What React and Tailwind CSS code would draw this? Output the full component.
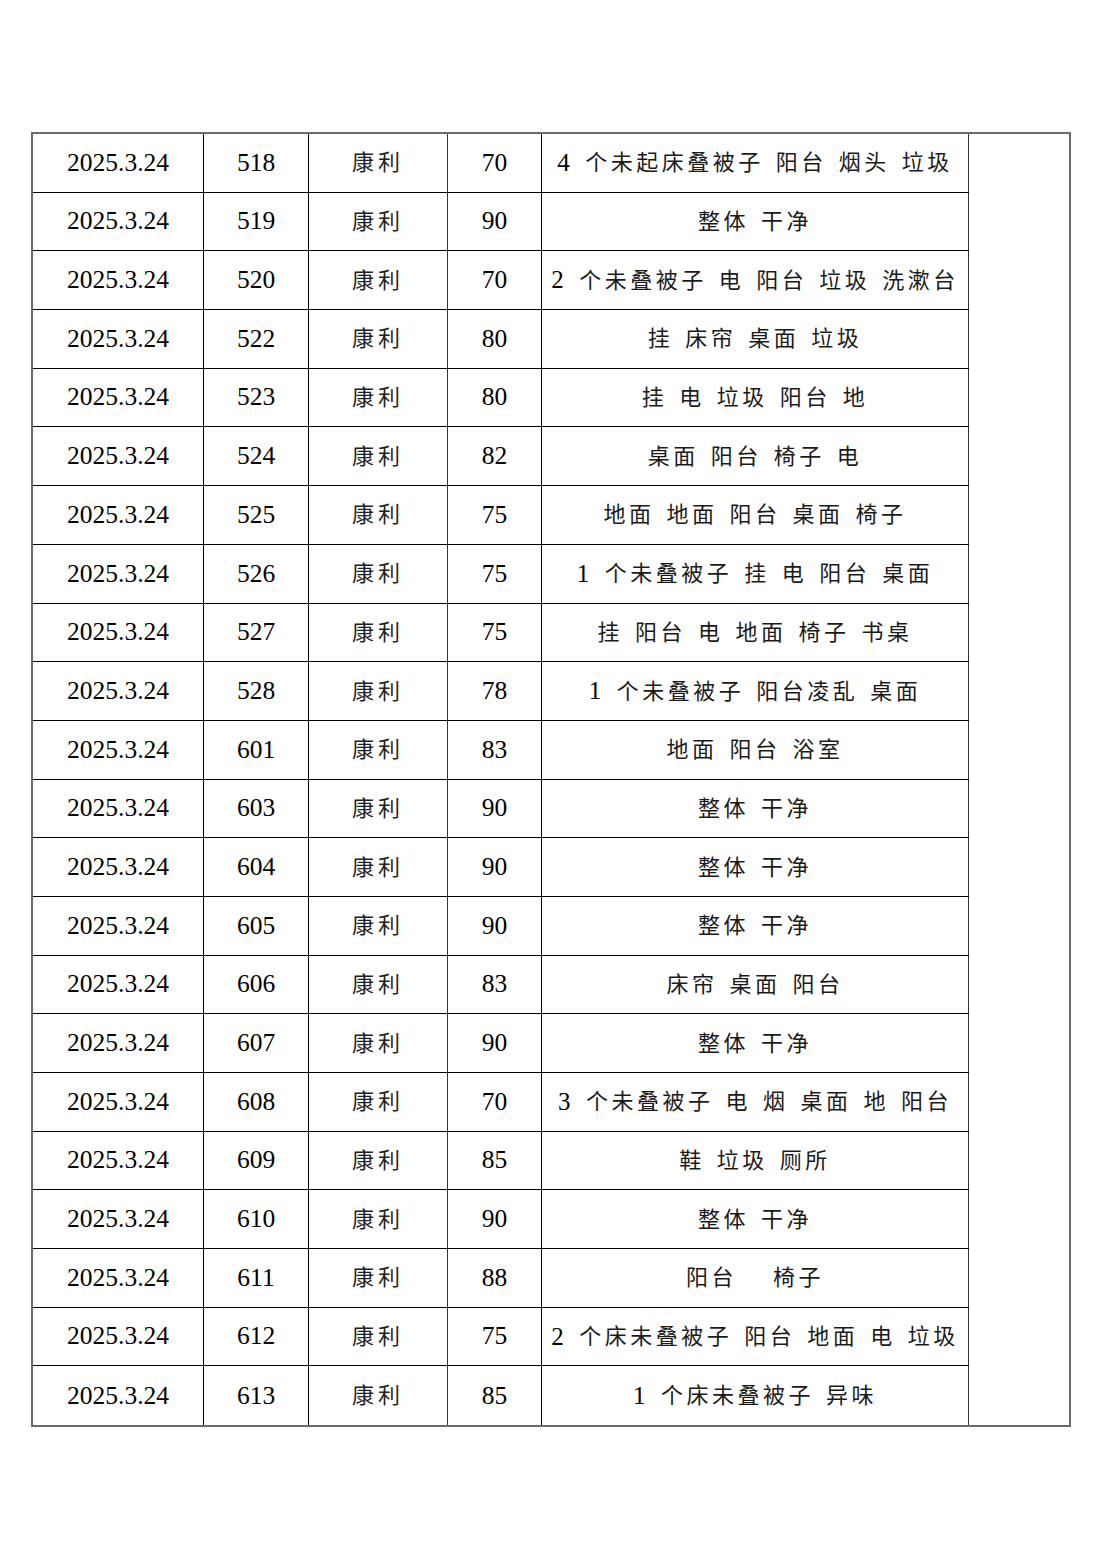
const rows = [
  ["518", "70", "4 个未起床叠被子 阳台 烟头 垃圾"],
  ["519", "90", "整体 干净"],
  ["520", "70", "2 个未叠被子 电 阳台 垃圾 洗漱台"],
  ["522", "80", "挂 床帘 桌面 垃圾"],
  ["523", "80", "挂 电 垃圾 阳台 地"],
  ["524", "82", "桌面 阳台 椅子 电"],
  ["525", "75", "地面 地面 阳台 桌面 椅子"],
  ["526", "75", "1 个未叠被子 挂 电 阳台 桌面"],
  ["527", "75", "挂 阳台 电 地面 椅子 书桌"],
  ["528", "78", "1 个未叠被子 阳台凌乱 桌面"],
  ["601", "83", "地面 阳台 浴室"],
  ["603", "90", "整体 干净"],
  ["604", "90", "整体 干净"],
  ["605", "90", "整体 干净"],
  ["606", "83", "床帘 桌面 阳台"],
  ["607", "90", "整体 干净"],
  ["608", "70", "3 个未叠被子 电 烟 桌面 地 阳台"],
  ["609", "85", "鞋 垃圾 厕所"],
  ["610", "90", "整体 干净"],
  ["611", "88", "阳台   椅子"],
  ["612", "75", "2 个床未叠被子 阳台 地面 电 垃圾"],
  ["613", "85", "1 个床未叠被子 异味"],
];

const serif = "font-['Liberation_Serif','Noto_Sans_CJK_SC',serif]";

function Desc({ text }) {
  const m = text.match(/^(\d)(.*)$/);
  if (!m) return text;
  return (
    <>
      <span className="text-[25px] text-black">{m[1]}</span>
      {m[2]}
    </>
  );
}

export default function App() {
  return (
    <div className="bg-white w-[1102px] h-[1559px] pt-[132px] pl-[31px]">
      <div className="w-[1040px] flex border-2 border-[#6b6b6b]">
        <div className="flex flex-col">
          {rows.map((r, i) => (
            <div
              key={r[0]}
              className={`flex h-[58.7px] ${i < rows.length - 1 ? "border-b border-black" : ""}`}
            >
              <div className={`w-[171px] border-r border-black flex items-center justify-center text-[25.5px] text-black ${serif}`}>
                2025.3.24
              </div>
              <div className={`w-[105px] border-r border-black flex items-center justify-center text-[25.5px] text-black ${serif}`}>
                {r[0]}
              </div>
              <div className={`w-[139px] border-r border-[#333] flex items-center justify-center text-[22px] tracking-[4px] text-[#222] ${serif}`}>
                康利
              </div>
              <div className={`w-[94px] border-r border-black flex items-center justify-center text-[25.5px] text-black ${serif}`}>
                {r[1]}
              </div>
              <div className={`w-[427px] border-r border-[#333] flex items-center justify-center text-[22px] tracking-[3.5px] [word-spacing:3px] text-[#1a1a1a] whitespace-pre ${serif}`}>
                <Desc text={r[2]} />
              </div>
            </div>
          ))}
        </div>
        <div className="flex-1"></div>
      </div>
    </div>
  );
}
